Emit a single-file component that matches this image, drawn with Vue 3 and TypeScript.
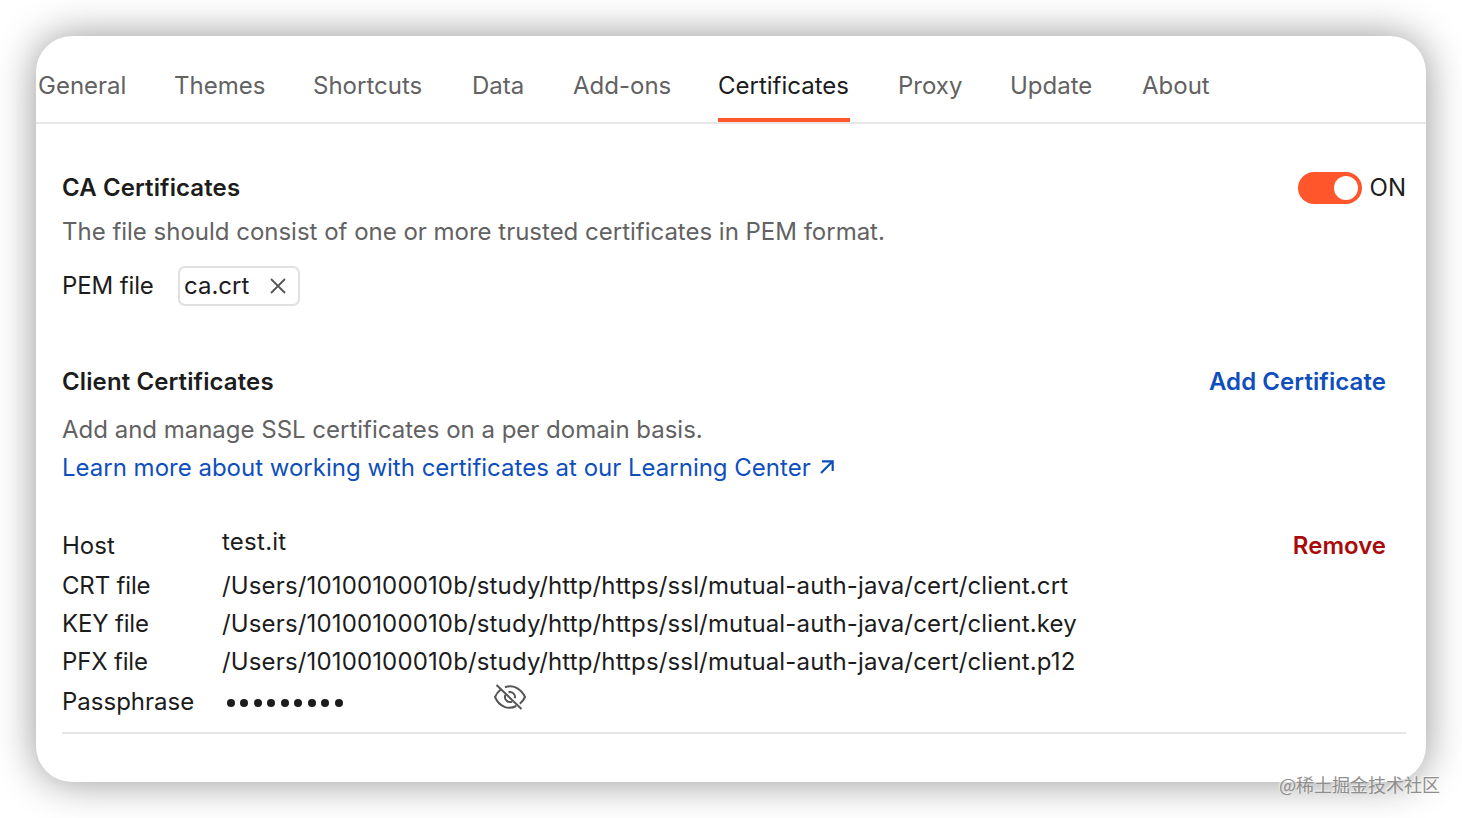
<script setup lang="ts">
const tabs: { name: string; width: number }[] = [
  { name: 'General', width: 88 },
  { name: 'Themes', width: 91 },
  { name: 'Shortcuts', width: 111 },
  { name: 'Data', width: 53 },
  { name: 'Add-ons', width: 97 },
  { name: 'Certificates', width: 132 },
  { name: 'Proxy', width: 64 },
  { name: 'Update', width: 84 },
  { name: 'About', width: 68 },
]
const base = '/Users/10100100010b/study/http/https/ssl/mutual-auth-java/cert/client.'
const files = [
  { label: 'CRT file', path: base + 'crt' },
  { label: 'KEY file', path: base + 'key' },
  { label: 'PFX file', path: base + 'p12' },
]
</script>

<template>
  <div class="page">
    <main class="panel">
      <nav class="tabs">
        <span v-for="t in tabs" :key="t.name" class="tab" :class="{ active: t.name === 'Certificates' }" :style="{ width: t.width + 'px' }">{{ t.name }}</span>
      </nav>
      <section class="content">
        <div class="row ca">
          <h2>CA Certificates</h2>
          <div class="switch"><span class="track"><i></i></span><span>ON</span></div>
        </div>
        <p class="muted desc">The file should consist of one or more trusted certificates in PEM format.</p>
        <div class="pem">
          <span class="pemlabel">PEM file</span>
          <span class="chip"><span>ca.crt</span>
            <svg width="16" height="16" viewBox="0 0 16 16"><path d="M1 1L15 15M15 1L1 15" fill="none" stroke="#555" stroke-width="1.8" /></svg>
          </span>
        </div>
        <div class="row client">
          <h2>Client Certificates</h2>
          <a class="add">Add Certificate</a>
        </div>
        <p class="muted add-desc">Add and manage SSL certificates on a per domain basis.</p>
        <a class="learn"><span class="learn-text">Learn more about working with certificates at our Learning Center</span>
          <svg width="14" height="14" viewBox="0 0 14 14"><path d="M1 13L12.2 1.8M2 1.3H12.7V11" fill="none" stroke="#0f4fbd" stroke-width="2.2" /></svg>
        </a>
        <div class="details">
          <div class="item host"><span class="key">Host</span><span class="hostval">test.it</span><a class="remove">Remove</a></div>
          <div v-for="f in files" :key="f.label" class="item"><span class="key narrow">{{ f.label }}</span><span class="path">{{ f.path }}</span></div>
          <div class="item pass">
            <span class="key">Passphrase</span>
            <span class="dots"><i v-for="n in 9" :key="n"></i></span>
            <svg class="eye" width="32" height="28" viewBox="0 0 32 28" fill="none" stroke="#555" stroke-width="2">
              <path d="M11 4.2C19 1.3 27 5.5 31 14C29.8 16.8 28 19 25.8 20.8" />
              <path d="M6.5 6.7C4.2 8.5 2.3 11 1 14C5.5 24.2 14.5 27 22.3 23" />
              <path d="M14.5 9.2A5 5 0 0 1 20.8 15.3M11.4 12A5 5 0 0 0 18 18.6" />
              <path d="M2.5 2L27.5 26" />
            </svg>
          </div>
        </div>
      </section>
    </main>
    <span class="watermark">@稀土掘金技术社区</span>
  </div>
</template>

<style>
body { margin: 0; background: #fff; overflow: hidden; }
</style>
<style scoped>
* { box-sizing: border-box; }
.page { width: 1462px; height: 818px; padding: 36px; position: relative; font: 24px/38px Inter, sans-serif; color: #1c1c1c; overflow: hidden; background: #fff; }
.panel { width: 1390px; height: 746px; border-radius: 36px; background: #fff; box-shadow: 0 0 40px rgba(0,0,0,.42); overflow: hidden; }
.tabs { height: 88px; display: flex; gap: 48px; padding-left: 2px; border-bottom: 2px solid #e8e8e8; color: #626262; }
.tab { height: 86px; padding-top: 31px; white-space: nowrap; flex: none; }
.active { color: #1c1c1c; border-bottom: 4px solid #ff562b; }
.content { padding: 45px 20px 0 26px; }
.row { display: flex; justify-content: space-between; height: 38px; }
h2 { margin: 0; font: 600 24px/38px Inter, sans-serif; letter-spacing: .11px; }
p { margin: 0; }
.muted { color: #626262; letter-spacing: -.01px; }
.switch { display: flex; align-items: center; gap: 8px; }
.track { width: 64px; height: 32px; border-radius: 16px; background: #ff562b; padding: 4px; display: flex; justify-content: flex-end; }
.track i { width: 24px; height: 24px; border-radius: 50%; background: #fff; }
.desc { margin-top: 6px; }
.pem { display: flex; align-items: center; margin-top: 15px; height: 40px; }
.pemlabel { width: 116px; letter-spacing: -.12px; }
.chip { width: 122px; height: 40px; border: 2px solid #e0e0e0; border-radius: 7px; display: flex; align-items: center; justify-content: space-between; padding: 0 12px 0 4px; }
.client { margin-top: 57px; padding-right: 20px; }
.add { font-weight: 600; color: #0f4fbd; letter-spacing: .08px; }
.add-desc { margin-top: 10px; }
.learn { color: #0f4fbd; display: flex; align-items: center; gap: 9px; }
.learn svg { margin-top: -3px; }
.details { margin-top: 40px; border-bottom: 2px solid #e6e6e6; height: 207px; }
.item { display: flex; height: 38px; white-space: nowrap; }
.key { width: 160px; flex: none; }
.narrow { letter-spacing: -.16px; }
.path { letter-spacing: .145px; }
.host { height: 40px; }
.hostval { margin-top: -4px; flex: 1; letter-spacing: .25px; }
.remove { margin-right: 20px; font-weight: 600; color: #a80b0b; }
.pass { padding-top: 2px; height: 40px; }
.dots { display: flex; gap: 5.5px; padding: 16px 0 0 4.6px; width: 272px; }
.dots i { width: 8px; height: 8px; border-radius: 50%; background: #1c1c1c; }
.watermark { position: absolute; right: 22px; bottom: 21px; font: 18px/26px "Noto Sans CJK SC", sans-serif; color: #8e8e8e; text-shadow: -1px -1px 1px rgba(255,255,255,.7); }
</style>
